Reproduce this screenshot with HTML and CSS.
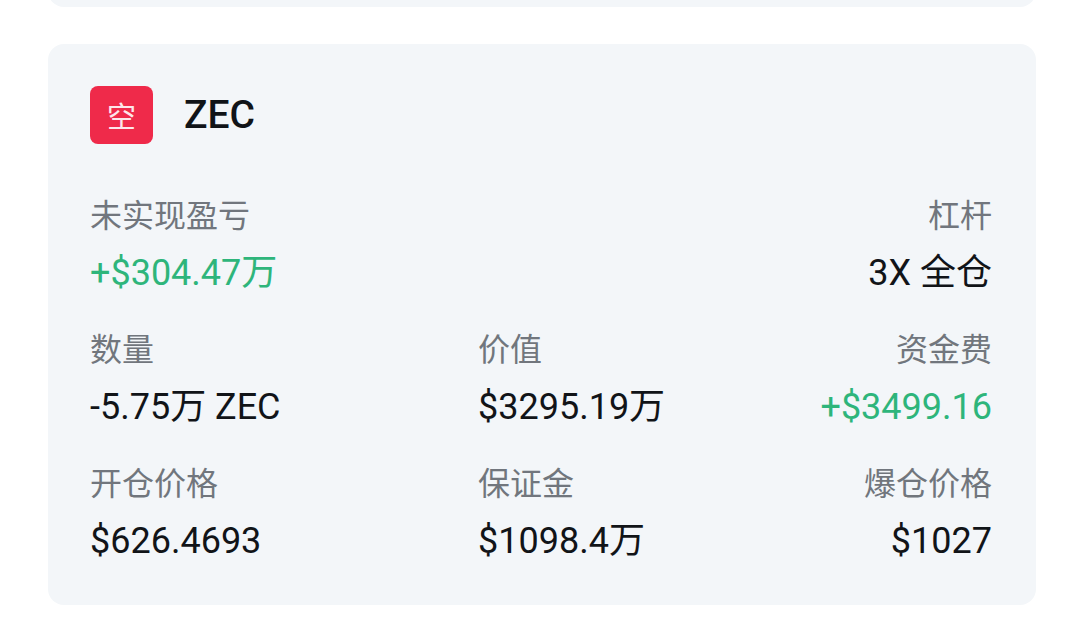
FILE: index.html
```html
<!DOCTYPE html>
<html lang="zh-CN">
<head>
    <meta charset="UTF-8">
    <meta name="viewport" content="width=device-width, initial-scale=1.0">
    <title>持仓</title>
    <link rel="stylesheet" href="styles.css">
</head>
<body>
    <div class="list">
        <div class="card card-prev"></div>

        <div class="card">
            <div class="card-head">
                <span class="side-badge">空</span>
                <span class="symbol">ZEC</span>
            </div>

            <div class="stats">
                <div class="stat">
                    <div class="label">未实现盈亏</div>
                    <div class="value up">+$304.47万</div>
                </div>
                <div class="stat stat-right col-3">
                    <div class="label">杠杆</div>
                    <div class="value">3X 全仓</div>
                </div>

                <div class="stat">
                    <div class="label">数量</div>
                    <div class="value">-5.75万 ZEC</div>
                </div>
                <div class="stat">
                    <div class="label">价值</div>
                    <div class="value">$3295.19万</div>
                </div>
                <div class="stat stat-right">
                    <div class="label">资金费</div>
                    <div class="value up">+$3499.16</div>
                </div>

                <div class="stat">
                    <div class="label">开仓价格</div>
                    <div class="value">$626.4693</div>
                </div>
                <div class="stat">
                    <div class="label">保证金</div>
                    <div class="value">$1098.4万</div>
                </div>
                <div class="stat stat-right">
                    <div class="label">爆仓价格</div>
                    <div class="value">$1027</div>
                </div>
            </div>
        </div>
    </div>
</body>
</html>
```

FILE: styles.css
```css
body {
    margin: 0;
    background: #ffffff;
    font-family: Roboto, "Noto Sans CJK SC", sans-serif;
    color: #111418;
}

.list {
    padding: 0 48px;
    display: flex;
    flex-direction: column;
    gap: 37px;
}

.card {
    background: #f3f6f9;
    border-radius: 16px;
    padding: 42px 44px 42px 42px;
}

.card-prev {
    height: 40px;
    padding: 0;
    margin-top: -33px;
}

.card-head {
    display: flex;
    align-items: center;
    gap: 31px;
    margin-bottom: 50px;
}

.side-badge {
    width: 63px;
    height: 58px;
    border-radius: 8px;
    background: #ef2a4a;
    color: #fde6ea;
    font-family: "Noto Sans CJK SC", sans-serif;
    font-size: 29px;
    display: flex;
    align-items: center;
    justify-content: center;
}

.symbol {
    font-size: 39px;
    font-weight: 500;
}

.stats {
    display: grid;
    grid-template-columns: 388px 1fr auto;
    row-gap: 33px;
}

.stat-right {
    text-align: right;
}

.col-3 {
    grid-column: 3;
}

.label {
    font-size: 32px;
    line-height: 44px;
    color: #71767d;
    margin-bottom: 13px;
}

.value {
    font-family: Roboto, "Noto Sans CJK SC", sans-serif;
    font-size: 36px;
    line-height: 44px;
}

.up {
    color: #2eb57b;
}
```
